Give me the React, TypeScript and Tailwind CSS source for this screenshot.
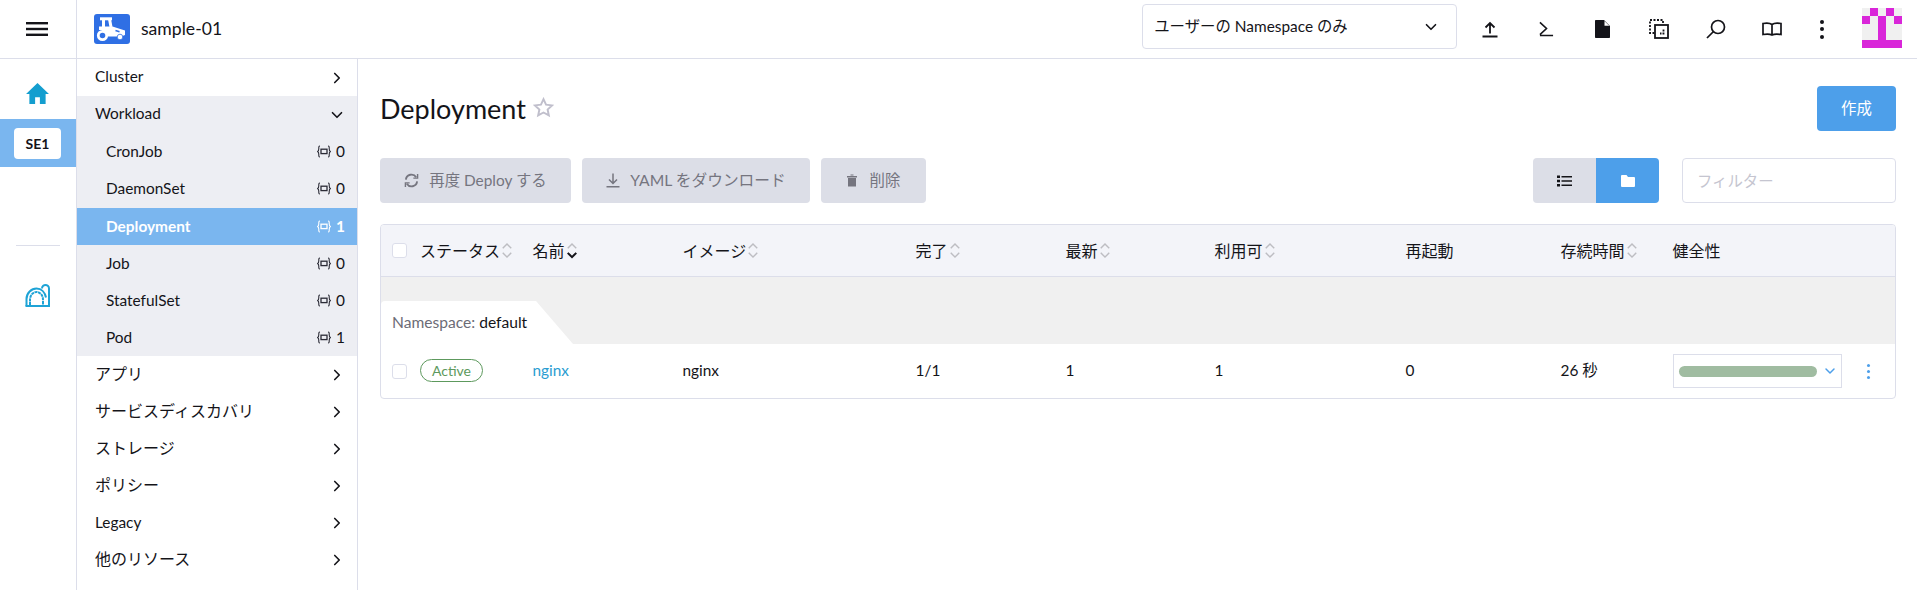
import { ChevronDown, ChevronRight } from 'lucide-react';

const FONT = "font-['Lato','Noto_Sans_CJK_JP',sans-serif]";

const workloads = [
  { name: 'CronJob', count: 0 },
  { name: 'DaemonSet', count: 0 },
  { name: 'Deployment', count: 1, active: true },
  { name: 'Job', count: 0 },
  { name: 'StatefulSet', count: 0 },
  { name: 'Pod', count: 1 },
];

const groupsBelow = ['アプリ', 'サービスディスカバリ', 'ストレージ', 'ポリシー', 'Legacy', '他のリソース'];

const columns = 'grid grid-cols-[39px_112.500px_150px_233px_150px_149px_191px_155px_112px_1fr]';

function Sort({ active }: { active?: boolean }) {
  return (
    <svg viewBox="0 0 12 18" className="w-[12px] h-[17px] ml-[1px] shrink-0" fill="none" strokeWidth="1.5">
      <path d="M1.5 6.5 6 2l4.500 4.500" stroke="#bdbdc2" />
      <path d="M1.500 11.500 6 16l4.500-4.500" stroke={active ? '#141419' : '#bdbdc2'} strokeWidth={active ? 2.200 : 1.5} />
    </svg>
  );
}

function HeaderCell({ label, sort, active }: { label: string; sort?: boolean; active?: boolean }) {
  return (
    <div className="flex items-center text-[16px] text-[#141419]">
      {label}
      {sort && <Sort active={active} />}
    </div>
  );
}

function Braces({ white }: { white?: boolean }) {
  const c = white ? '#ffffff' : '#2b2b36';
  return (
    <svg viewBox="0 0 14 13" className="w-[14px] h-[13px]" fill="none" stroke={c} strokeWidth="1.100">
      <path d="M3 1C1.600 1 1.800 2.200 1.800 3.500 1.800 5 1.500 6 .6 6.500c.9.500 1.200 1.500 1.200 3 0 1.300-.2 2.500 1.200 2.500" />
      <path d="M11 1c1.400 0 1.200 1.200 1.200 2.500 0 1.500.3 2.500 1.200 3-.9.500-1.200 1.500-1.200 3 0 1.300.2 2.500-1.200 2.500" />
      <rect x="4" y="4.200" width="6" height="4.400" strokeWidth="1.300" />
    </svg>
  );
}

function GroupRow({ label, open }: { label: string; open?: boolean }) {
  // the Japanese labels run a little wider than the Lato ones in the sidebar
  const isLatin = /^[A-Za-z]+$/.test(label);
  return (
    <div className="h-[37.140px] flex items-center justify-between pl-[18px] pr-[11px] text-[#141419]">
      <span className={isLatin ? '-mt-[2px] text-[15.400px]' : '-mt-[2px] text-[16px]'}>{label}</span>
      {open ? (
        <ChevronDown size={18} strokeWidth={2.200} />
      ) : (
        <ChevronRight size={18} strokeWidth={2.200} />
      )}
    </div>
  );
}

function TopIcon({ children }: { children: React.ReactNode }) {
  return <div className="w-[56.300px] h-[40px] flex items-center justify-center text-[#141419]">{children}</div>;
}

export default function App() {
  return (
    <div className={`${FONT} w-[1917px] h-[590px] bg-white flex flex-col overflow-hidden`}>
      <header className="h-[59px] shrink-0 flex items-center border-b border-[#dcdeea]">
        <div className="w-[77px] h-full border-r border-[#dcdeea] flex items-center justify-center pr-[2px]">
          <svg viewBox="0 0 22 14" className="w-[22px] h-[14px]" fill="#141419">
            <rect width="22" height="2.400" y="0" />
            <rect width="22" height="2.400" y="5.800" />
            <rect width="22" height="2.400" y="11.600" />
          </svg>
        </div>
        <svg viewBox="0 0 36 30" className="ml-[17px] w-[36px] h-[30px] shrink-0">
          <rect width="36" height="30" rx="3" fill="#2f6fe4" />
          <path d="M6 4.800h12" stroke="#fff" strokeWidth="3" />
          <path d="M9.500 5v8M15.500 5l1.500 8" stroke="#fff" strokeWidth="3" />
          <path d="M5 12.500h13.500L31 16.500v4.500l-4 1.500H12L8 16H5Z" fill="#fff" />
          <path d="M21.500 16.500l4 1.300" stroke="#2f6fe4" strokeWidth="1.500" />
          <circle cx="8.500" cy="21.500" r="4.200" fill="#2f6fe4" stroke="#fff" strokeWidth="2.800" />
          <circle cx="26" cy="23" r="2.800" fill="#fff" stroke="#2f6fe4" strokeWidth=".8" />
        </svg>
        <span className="ml-[11px] text-[17.600px] text-[#141419]">sample-01</span>
        <div className="ml-auto mb-[5px] w-[315px] h-[45px] rounded-[4px] border border-[#dcdeea] flex items-center justify-between pl-[11px] pr-[16px] text-[15.400px] text-[#141419]">
          <span>ユーザーの Namespace のみ</span>
          <ChevronDown size={18} strokeWidth={2.200} />
        </div>
        <div className="ml-[5px] flex items-center">
          <TopIcon>
            <svg viewBox="0 0 16 16" className="w-[16px] h-[17px]" fill="none" stroke="currentColor" strokeWidth="1.800">
              <path d="M8 12V2M3.500 6 8 1.500 12.500 6M.5 15h15" />
            </svg>
          </TopIcon>
          <TopIcon>
            <svg viewBox="0 0 16 16" className="w-[15px] h-[16px]" fill="none" stroke="currentColor" strokeWidth="1.700">
              <path d="m1 1 7 6.500L1 14M1 15h14" />
            </svg>
          </TopIcon>
          <TopIcon>
            <svg viewBox="0 0 15 18" className="w-[15px] h-[18px]" fill="currentColor">
              <path d="M.8 0H9l6 6v11.200a.8.8 0 0 1-.8.8H.8a.8.8 0 0 1-.8-.8V.8A.8.8 0 0 1 .8 0Z" />
              <path d="M9.500 1v4.800h4.800Z" fill="#fff" />
            </svg>
          </TopIcon>
          <TopIcon>
            <svg viewBox="0 0 20 20" className="w-[20px] h-[20px]" fill="none" stroke="currentColor" strokeWidth="1.800">
              <path d="M5.500 14H1V1h13v4" strokeDasharray="2 1.500" />
              <rect x="6" y="6" width="13" height="13" />
              <path d="M14.500 10.500v4h-3.500" strokeDasharray="2 1" />
            </svg>
          </TopIcon>
          <TopIcon>
            <svg viewBox="0 0 20 20" className="w-[20px] h-[20px]" fill="none" stroke="currentColor" strokeWidth="1.700">
              <circle cx="12" cy="8" r="6.500" />
              <path d="M7.500 12.500 1 19" />
            </svg>
          </TopIcon>
          <TopIcon>
            <svg viewBox="0 0 20 14" className="w-[20px] h-[14px]" fill="none" stroke="currentColor" strokeWidth="1.700">
              <path d="M10 2.500C8 1 4 1 1 1.500v11c3-.5 7-.5 9 .5 2-1 6-1 9-.5v-11c-3-.5-7-.5-9 1Zm0 0V13" />
            </svg>
          </TopIcon>
        </div>
        <div className="w-[44px] flex flex-col items-center gap-[3.500px]">
          <span className="w-[4px] h-[4px] rounded-full bg-[#141419]" />
          <span className="w-[4px] h-[4px] rounded-full bg-[#141419]" />
          <span className="w-[4px] h-[4px] rounded-full bg-[#141419]" />
        </div>
        <svg viewBox="0 0 5 5" className="ml-[18px] mr-[15px] mb-[2px] w-[40px] h-[40px]" shapeRendering="crispEdges">
          <rect width="5" height="5" fill="#f0f0f0" />
          <path d="M1 0h1v1H1zM3 0h1v1H3zM0 1h1v1H0zM2 1h1v3H2zM4 1h1v1H4zM0 4h5v1H0z" fill="#d926d9" />
        </svg>
      </header>

      <div className="flex-1 flex min-h-0">
        <aside className="w-[77px] shrink-0 border-r border-[#dcdeea] flex flex-col">
          <div className="h-[60px] flex items-center justify-center pr-[1px] pt-[9px]">
            <svg viewBox="0 0 24 22" className="w-[23px] h-[21px]" fill="#149ecf">
              <path d="M12 0 0 11.500h3.500V22h6v-7h5v7h6V11.500H24Z" />
            </svg>
          </div>
          <div className="h-[48px] bg-[#7ab6ef] flex items-center justify-center pr-[1px]">
            <div className="w-[47px] h-[31px] rounded-[4px] bg-white flex items-center justify-center text-[14px] font-bold text-[#141419]">
              SE1
            </div>
          </div>
          <div className="mt-[78px] mx-[16px] h-px bg-[#dcdeea]" />
          <div className="mt-[38px] flex justify-center pr-[1px]">
            <svg viewBox="0 0 25 23" className="w-[25px] h-[23px]" fill="none" stroke="#1ea3d6" strokeWidth="2">
              <path d="M1.500 22v-7c0-6 5-10.500 10-10.500s8.500 4 9.500 9" />
              <path d="M5 21v-5c0-5 3-8 6.500-8s6.500 3 6.500 8v5" strokeDasharray="3 .6" />
              <path d="M.5 22h23" />
              <path d="M17 4.500C17 2 19 1 20.500 1S24 2 24 4.500V23" />
            </svg>
          </div>
        </aside>

        <nav className="w-[281px] shrink-0 border-r border-[#dcdeea]">
          <GroupRow label="Cluster" />
          <div className="bg-[#edeef3]">
            <GroupRow label="Workload" open />
            {workloads.map((w) => (
              <div
                key={w.name}
                className={
                  w.active
                    ? 'h-[37.140px] flex items-center justify-between pl-[29px] pr-[12px] text-[15.400px] bg-[#7ab6ef] text-white font-bold'
                    : 'h-[37.140px] flex items-center justify-between pl-[29px] pr-[12px] text-[15.400px] text-[#141419]'
                }
              >
                <span>{w.name}</span>
                <span className={w.active ? 'flex items-center gap-[5px] font-bold' : 'flex items-center gap-[5px]'}>
                  <Braces white={w.active} />
                  {w.count}
                </span>
              </div>
            ))}
          </div>
          {groupsBelow.map((g) => (
            <GroupRow key={g} label={g} />
          ))}
        </nav>

        <main className="flex-1 min-w-0 pl-[22px] pr-[21px]">
          <div className="h-[45px] mt-[27px] flex items-center justify-between">
            <div className="flex items-center">
              <h1 className="text-[27px] text-[#141419] leading-none">Deployment</h1>
              <svg viewBox="0 0 24 24" className="ml-[7px] w-[21px] h-[21px] -mt-[2px]" fill="none" stroke="#c0bfcc" strokeWidth="2.200">
                <path d="m12 2.500 2.900 6.300 6.900.8-5.100 4.700 1.400 6.800-6.100-3.400-6.100 3.400 1.400-6.800-5.100-4.700 6.900-.8Z" />
              </svg>
            </div>
            <button className="w-[79px] h-[45px] rounded-[4px] bg-[#4d9fea] text-white text-[15.400px]">作成</button>
          </div>

          <div className="mt-[27px] h-[45px] flex items-center">
            <button className="w-[191px] h-[45px] rounded-[4px] bg-[#dcdee7] text-[#75757f] text-[15.400px] flex items-center justify-center gap-[10px]">
              <svg viewBox="0 0 16 16" className="w-[15px] h-[15px]" fill="none" stroke="currentColor" strokeWidth="2">
                <path d="M2 7a6 6 0 0 1 11-2.500M14 9a6 6 0 0 1-11 2.500" />
                <path d="M14.500 1v4.500H10M1.500 15v-4.500H6" strokeWidth="1.500" />
              </svg>
              再度 Deploy する
            </button>
            <button className="ml-[11px] w-[228px] h-[45px] rounded-[4px] bg-[#dcdee7] text-[#75757f] text-[15.700px] flex items-center justify-center gap-[10px]">
              <svg viewBox="0 0 14 14" className="w-[14px] h-[15px]" fill="none" stroke="currentColor" strokeWidth="1.500">
                <path d="M7 0v9.500M3 6l4 4 4-4M.5 13.200h13" />
              </svg>
              YAML をダウンロード
            </button>
            <button className="ml-[11px] w-[105px] h-[45px] rounded-[4px] bg-[#dcdee7] text-[#75757f] text-[15.400px] flex items-center justify-center gap-[13px]">
              <svg viewBox="0 0 10 12" className="w-[10px] h-[13px]" fill="currentColor">
                <path d="M0 1.500h10V3H0zM3.500 0h3v1h-3zM1 3.500h8V12H1z" />
              </svg>
              削除
            </button>
            <div className="ml-auto flex h-[45px] rounded-[4px] overflow-hidden">
              <div className="w-[63px] bg-[#dcdee7] flex items-center justify-center">
                <svg viewBox="0 0 15 12" className="w-[15px] h-[12px]" fill="#141419">
                  <path d="M0 .5h3v2.500H0zM4.500 1h10.500v1.500H4.500zM0 4.800h3v2.500H0zM4.500 5.300h10.500v1.500H4.500zM0 9h3v2.500H0zM4.500 9.500h10.500V11H4.500z" />
                </svg>
              </div>
              <div className="w-[63px] bg-[#4d9fea] flex items-center justify-center">
                <svg viewBox="0 0 14 12" className="w-[14px] h-[12px]" fill="#fff">
                  <path d="M1 0h4.500L7 2h6a1 1 0 0 1 1 1v8a1 1 0 0 1-1 1H1a1 1 0 0 1-1-1V1a1 1 0 0 1 1-1Z" />
                </svg>
              </div>
            </div>
            <input
              placeholder="フィルター"
              className="ml-[23px] w-[214px] h-[45px] rounded-[4px] border border-[#dcdeea] px-[14px] text-[15.400px] outline-none placeholder:text-[#c5c5d0]"
            />
          </div>

          <div className="mt-[21px] rounded-[4px] border border-[#dcdeea] overflow-hidden">
            <div className={`${columns} h-[52px] items-center bg-[#f3f4f9] border-b border-[#dcdeea]`}>
              <div className="pl-[11px]">
                <div className="w-[15px] h-[15px] rounded-[3px] border border-[#dcdeea] bg-white" />
              </div>
              <HeaderCell label="ステータス" sort />
              <HeaderCell label="名前" sort active />
              <HeaderCell label="イメージ" sort />
              <HeaderCell label="完了" sort />
              <HeaderCell label="最新" sort />
              <HeaderCell label="利用可" sort />
              <HeaderCell label="再起動" />
              <HeaderCell label="存続時間" sort />
              <HeaderCell label="健全性" />
            </div>
            <div className="h-[67px] bg-[#f0f0f0] flex items-end">
              <div className="w-[192px] h-[43px] bg-white flex items-center pl-[11px] pt-[1px] text-[15.600px] text-[#141419] rounded-tl-[4px] [clip-path:polygon(0_0,155px_0,192px_100%,0_100%)]">
                <span className="text-[#6c6c76]">Namespace:&nbsp;</span>default
              </div>
            </div>
            <div className={`${columns} h-[54px] items-center text-[15.400px] text-[#141419]`}>
              <div className="pl-[11px]">
                <div className="w-[15px] h-[15px] rounded-[3px] border border-[#dcdeea] bg-white" />
              </div>
              <div>
                <span className="inline-flex items-center justify-center w-[63px] h-[23px] rounded-full border border-[#5d995d] text-[#5d995d] text-[14px]">
                  Active
                </span>
              </div>
              <div className="text-[#2a9dd1]">nginx</div>
              <div>nginx</div>
              <div>1/1</div>
              <div>1</div>
              <div>1</div>
              <div>0</div>
              <div>26 秒</div>
              <div className="flex items-center">
                <div className="w-[169px] h-[34px] border border-[#dcdeea] flex items-center pl-[5px] gap-[5px]">
                  <div className="w-[138px] h-[11px] rounded-full bg-[#a0bca1]" />
                  <ChevronDown size={16} strokeWidth={2.200} className="text-[#4d9fea]" />
                </div>
                <div className="ml-[25px] flex flex-col items-center gap-[3px]">
                  <span className="w-[3px] h-[3px] rounded-full bg-[#4d9fea]" />
                  <span className="w-[3px] h-[3px] rounded-full bg-[#4d9fea]" />
                  <span className="w-[3px] h-[3px] rounded-full bg-[#4d9fea]" />
                </div>
              </div>
            </div>
          </div>
        </main>
      </div>
    </div>
  );
}
